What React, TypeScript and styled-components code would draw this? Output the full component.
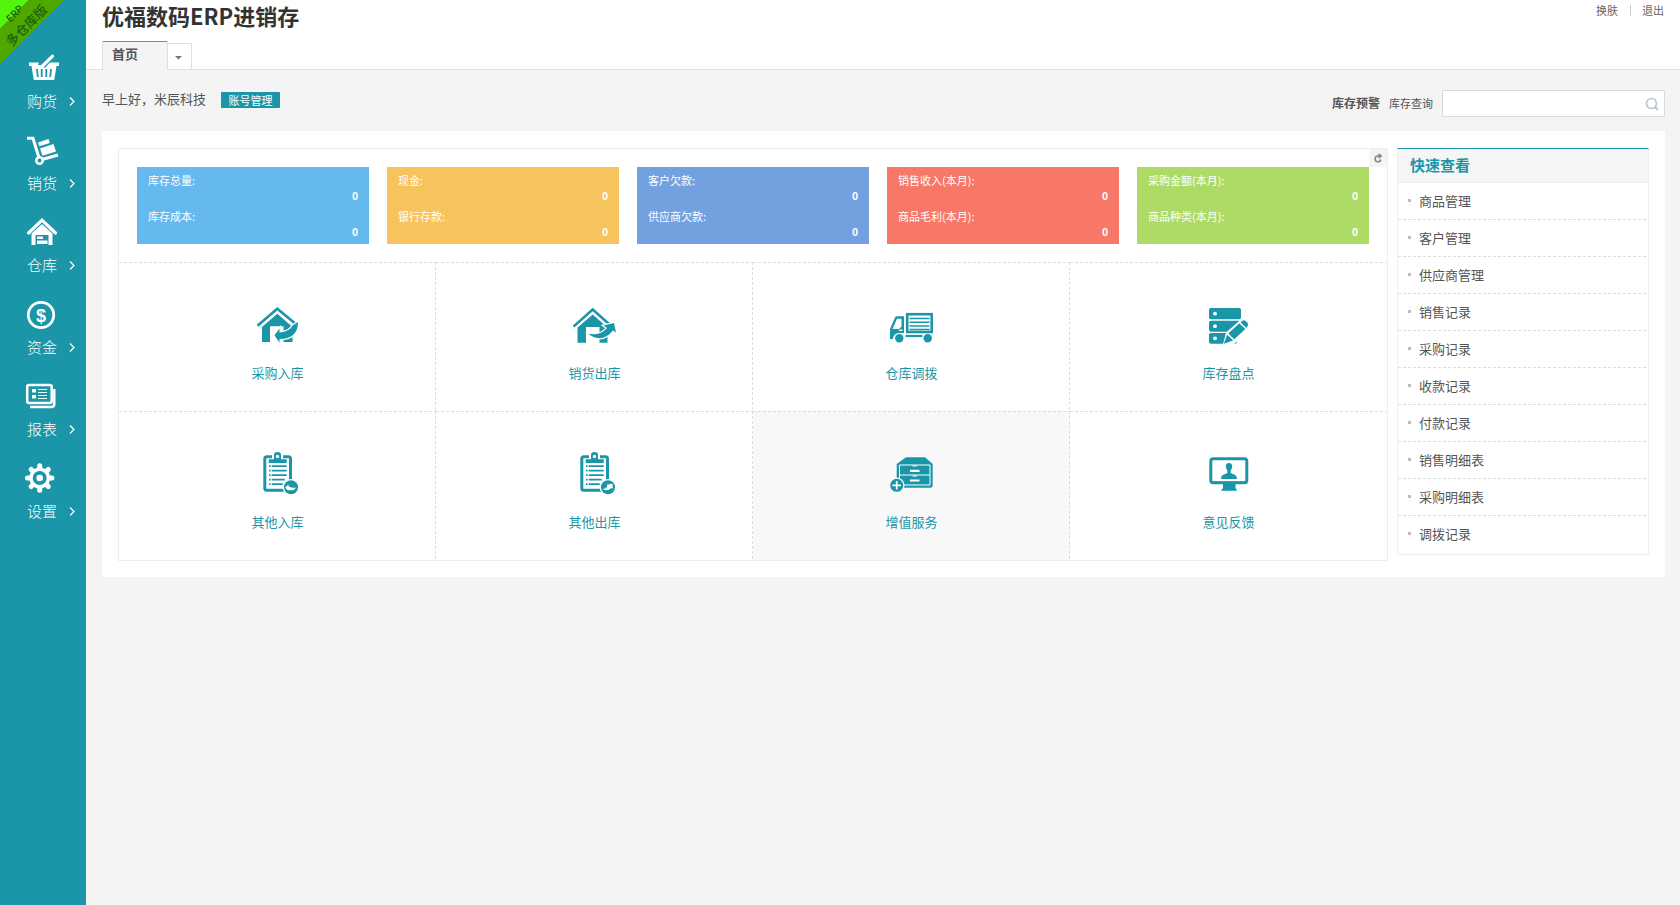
import React from "react";
import styled, { createGlobalStyle } from "styled-components";

const teal = "#1b96a9";
const line = "#eeeeee";
const dash = "#dddddd";

const Global = createGlobalStyle`
  *, *::before, *::after { box-sizing: border-box; }
  body {
    margin: 0;
    background: #f4f4f4;
    color: #555;
    font: 13px/20px "Noto Sans CJK SC", "Noto Sans", sans-serif;
  }
  a { color: inherit; text-decoration: none; }
  h1, h2, ul, dl, dd { margin: 0; padding: 0; }
  ul { list-style: none; }
  button { font: inherit; cursor: pointer; }
`;

const Page = styled.div`
  display: flex;
  min-height: 100vh;
`;

const Sidebar = styled.aside`
  position: relative;
  flex: 0 0 86px;
  padding-top: 50px;
  background: ${teal};
`;

const Ribbon = styled.div`
  position: absolute;
  top: 0;
  left: 0;
  width: 64px;
  height: 63px;
  background: linear-gradient(135deg, #52f50c 0 20px, #4fa800 20px 45px, transparent 45px);
  color: #1c5f10;
`;

const RibbonText = styled.span<{ $x: number; $y: number; $size: number }>`
  position: absolute;
  left: ${(p) => p.$x}px;
  top: ${(p) => p.$y}px;
  font-size: ${(p) => p.$size}px;
  line-height: 13px;
  font-weight: 500;
  white-space: nowrap;
  transform: translate(-50%, -50%) rotate(-45deg);
`;

const NavList = styled.ul`
  display: flex;
  flex-direction: column;
  gap: 21px;
`;

const NavLink = styled.a`
  display: block;
  color: #fff;
`;

const NavIcon = styled.svg`
  display: block;
  width: 36px;
  height: 36px;
  margin: 0 0 5px 24px;
`;

const NavLabel = styled.span`
  display: flex;
  align-items: center;
  gap: 12px;
  padding-left: 27px;
  font-size: 15px;
  font-weight: 300;
`;

const Main = styled.main`
  flex: 1;
  min-width: 0;
`;

const Header = styled.header`
  display: flex;
  justify-content: space-between;
  padding: 0 15px 0 16px;
  background: #fff;
  border-bottom: 1px solid #dfdfdf;
`;

const Title = styled.h1`
  margin-bottom: 11px;
  font-size: 22px;
  line-height: 30px;
  color: #333;
`;

const Tabs = styled.nav`
  display: flex;
  align-items: flex-end;
`;

const Tab = styled.a`
  width: 66px;
  height: 29px;
  margin-bottom: -1px;
  padding-left: 9px;
  border: solid #dfdfdf;
  border-width: 0 1px;
  background: linear-gradient(#3ba6b5 0 1px, #f4f4f4 1px);
  line-height: 26px;
  font-weight: 700;
`;

const TabMenu = styled.button`
  display: grid;
  place-items: center;
  width: 24px;
  height: 26px;
  padding: 2px 2px 0 0;
  border: solid #dfdfdf;
  border-width: 1px 1px 0 0;
  border-radius: 0 2px 0 0;
  background: #fff;
`;

const UserLinks = styled.div`
  display: flex;
  gap: 12px;
  padding-right: 1px;
  font-size: 11px;
  color: #666;

  a + a::before {
    content: "";
    display: inline-block;
    height: 11px;
    margin-right: 11px;
    border-left: 1px solid #ccc;
    vertical-align: -1px;
  }
`;

const Content = styled.div`
  padding: 0 15px 16px 16px;
`;

const TopRow = styled.div`
  display: flex;
  justify-content: space-between;
  align-items: flex-start;
  padding: 20px 0 14px;
`;

const Greeting = styled.div`
  display: flex;
  gap: 15px;
  line-height: 18px;
`;

const AccountButton = styled.button`
  width: 59px;
  height: 16px;
  margin-top: 2px;
  padding: 0 0 1px;
  border: 0;
  border-radius: 1px;
  background: ${teal};
  color: #fff;
  font-size: 11px;
  line-height: 14px;
`;

const Search = styled.form`
  display: flex;
  align-items: center;
  gap: 9px;
  font-size: 11px;

  label { padding-bottom: 2px; }
`;

const Warning = styled.a`
  padding-bottom: 2px;
  font-size: 12px;
  font-weight: 700;
`;

const SearchBox = styled.span`
  display: flex;
  align-items: center;
  width: 223px;
  height: 27px;
  padding-right: 5px;
  border: 1px solid #d3dce2;
  background: #fff;
`;

const SearchInput = styled.input`
  flex: 1;
  min-width: 0;
  border: 0;
  outline: 0;
  padding: 0 6px;
  background: transparent;
`;

const IconButton = styled.button`
  display: grid;
  padding: 0;
  border: 0;
  background: transparent;
`;

const Panel = styled.section`
  display: flex;
  align-items: flex-start;
  gap: 9px;
  padding: 17px 16px 16px;
  background: #fff;
`;

const Board = styled.div`
  position: relative;
  flex: 1;
  min-width: 0;
  border: 1px solid ${line};
`;

const Refresh = styled.button`
  position: absolute;
  top: 0;
  right: 0;
  display: grid;
  place-items: center;
  width: 18px;
  height: 18px;
  padding: 0;
  border: 0;
  background: #f4f4f4;
`;

const Stats = styled.div`
  display: flex;
  gap: 18px;
  padding: 18px;
`;

const StatCard = styled.dl<{ $color: string }>`
  flex: 1;
  display: flex;
  flex-direction: column;
  gap: 4px;
  padding: 5px 11px 4px;
  background: ${(p) => p.$color};
  color: #fff;
  font-size: 11px;
  line-height: 16px;

  dd {
    text-align: right;
    font-family: "Liberation Sans", sans-serif;
    font-weight: 700;
  }
`;

const hDash = `repeating-linear-gradient(90deg, ${dash} 0 3px, transparent 3px 5px)`;
const vDash = `repeating-linear-gradient(180deg, ${dash} 0 3px, transparent 3px 5px)`;

const Actions = styled.div`
  display: grid;
  grid-template-columns: repeat(4, 1fr);
`;

const Action = styled.a<{ $active?: boolean; $last: boolean }>`
  display: flex;
  flex-direction: column;
  align-items: center;
  gap: 15px;
  padding: 38px 0 28px;
  background:
    ${hDash} top / 100% 1px no-repeat,
    ${(p) => (p.$last ? "" : `${vDash} right / 1px 100% no-repeat,`)}
    ${(p) => (p.$active ? "#f8f8f8" : "#fff")};
  color: ${teal};

  svg {
    width: 47px;
    height: 48px;
  }
`;

const Quick = styled.aside`
  flex: 0 0 252px;
  padding-bottom: 1px;
  border: 1px solid ${line};
  border-top-color: ${teal};
`;

const QuickTitle = styled.h2`
  padding: 0 12px 2px;
  border-bottom: 1px solid ${line};
  background: #f6f6f6;
  color: ${teal};
  font-size: 15px;
  line-height: 31px;
`;

const QuickItem = styled.li`
  &:not(:last-child) {
    background: ${hDash} bottom / 100% 1px no-repeat;
  }
  a {
    display: flex;
    align-items: center;
    gap: 8px;
    height: 37px;
    padding: 0 0 2px 10px;
  }
  a::before {
    content: "";
    width: 3px;
    height: 3px;
    background: #bbb;
  }
`;

const navItems: [string, React.ReactNode][] = [
  ["购货", (
    <>
      <path d="M5 12.5h10l-1 2.500h9l2-2.500h10v3.500h-2.500l-2.300 14H9.800L7.500 16H5z" fill="#fff" />
      <path d="M28.500 6 18.500 16" stroke={teal} strokeWidth="6" />
      <path d="M28.500 6.200 18.500 16" stroke="#fff" strokeWidth="3.200" strokeLinecap="round" />
      <path d="M13 19l.8 8M17.700 19v8M22.300 19v8M27 19l-.8 8" stroke={teal} strokeWidth="1.800" />
    </>
  )],
  ["销货", (
    <>
      <path d="M3 6.200h6l6 19.500M18 27.500l16-4.500" fill="none" stroke="#fff" strokeWidth="3" />
      <circle cx="15.500" cy="28.500" r="3.200" fill="none" stroke="#fff" strokeWidth="2.500" />
      <path d="M14 10.500 24.500 7l1.300 4-10.500 3.300zM16 16.500 29.500 12l2.500 7.500-13.500 4.300z" fill="#fff" />
    </>
  )],
  ["仓库", (
    <>
      <path d="M4.500 19 18 6.200 31.500 19" fill="none" stroke="#fff" strokeWidth="3.200" strokeLinecap="round" />
      <path d="M7.500 31V19.500L18 10l10.500 9.500V31z" fill="#fff" />
      <path d="M11.500 21h13v10h-13z" fill={teal} />
      <path d="M13 22.500h6v2.500h-6zM13 26.500h10.500V30H13z" fill="#fff" />
    </>
  )],
  ["资金", (
    <>
      <circle cx="17" cy="19" r="12.700" fill="none" stroke="#fff" strokeWidth="2.700" />
      <text x="17" y="25.500" textAnchor="middle" fill="#fff" fontSize="18" fontWeight="700" fontFamily="Liberation Sans, sans-serif">$</text>
    </>
  )],
  ["报表", (
    <>
      <rect x="3.200" y="7" width="24.500" height="18" rx="2" fill="none" stroke="#fff" strokeWidth="2.500" />
      <path d="M30.300 11v15q0 3-3 3H6" fill="none" stroke="#fff" strokeWidth="2.400" />
      <path d="M8 11h4v3.500H8zM8 17h4v3.500H8z" fill="#fff" />
      <path d="M14 11.500h9M14 14.500h9M14 17.500h9M14 20.500h9" stroke="#fff" strokeWidth="1.200" />
    </>
  )],
  ["设置", (
    <>
      <g stroke="#fff" strokeWidth="5" strokeLinecap="round">
        <path d="M15.700 5.800v24.400M3.500 18h24.400M7.100 9.400l17.200 17.200M24.300 9.400 7.100 26.600" />
      </g>
      <circle cx="15.700" cy="18" r="10.500" fill="#fff" />
      <circle cx="15.700" cy="18" r="7" fill={teal} />
      <circle cx="15.700" cy="18" r="3.300" fill="#fff" />
    </>
  )],
];

const stats = [
  { color: "#66b9ef", rows: ["库存总量:", "库存成本:"] },
  { color: "#f7c35c", rows: ["现金:", "银行存款:"] },
  { color: "#73a1df", rows: ["客户欠款:", "供应商欠款:"] },
  { color: "#f77866", rows: ["销售收入(本月):", "商品毛利(本月):"] },
  { color: "#aedb65", rows: ["采购金额(本月):", "商品种类(本月):"] },
];

const Clipboard = ({ children }: { children: React.ReactNode }) => (
  <>
    <rect x="10.800" y="7.800" width="25.700" height="33.500" rx="2" fill="none" stroke={teal} strokeWidth="3" />
    <path d="M18 5h11v6H18z" fill="#fff" />
    <path d="M14.700 10.300h5.300V6q0-3 3.500-3T27 6v4.300h5.700V14h-18z" fill={teal} />
    <circle cx="23.500" cy="7.500" r="1.700" fill="#fff" />
    <path d="M17.700 17.200h15M17.700 21.700h15M17.700 26.200h15M17.700 30.700h13M17.700 35.200h11" stroke={teal} strokeWidth="1.800" />
    <path d="M15 17.200h1.600M15 21.700h1.600M15 26.200h1.600M15 30.700h1.600M15 35.200h1.600" stroke={teal} strokeWidth="1.800" />
    <circle cx="37" cy="38.300" r="8.400" fill="#fff" />
    <circle cx="37" cy="38.300" r="7" fill={teal} />
    {children}
  </>
);

const actions: { label: string; icon: React.ReactNode; active?: boolean }[] = [
  {
    label: "采购入库",
    icon: (
      <>
        <path d="M3.500 25.800 23.300 8.700 43 25" fill="none" stroke={teal} strokeWidth="2.600" />
        <path d="M8 42V27L23.300 13.800 38.500 27V42H29.500V26.300H16V42z" fill={teal} />
        <path d="M20.500 35.300l5-6.800V32.500Q36 31.500 38.500 25.500l5.500-3.500Q44 39 25.500 39v3.700z" fill={teal} stroke="#fff" strokeWidth="2.400" paintOrder="stroke" />
      </>
    ),
  },
  {
    label: "销货出库",
    icon: (
      <>
        <path d="M2.500 26.600 21.700 9.500 38 24" fill="none" stroke={teal} strokeWidth="2.600" />
        <path d="M6.500 42.700V27.500L21.700 14.500 36.500 27.500V42.700H28.500V27H15V42.700z" fill={teal} />
        <path d="M17.500 33.800Q29 36 36 28l-3.500-2.500L43 23l2 9.500-3-2Q34 40.500 24 37.500 20 36.300 17.500 33.800z" fill={teal} stroke="#fff" strokeWidth="2.400" paintOrder="stroke" />
      </>
    ),
  },
  {
    label: "仓库调拨",
    icon: (
      <>
        <rect x="19.200" y="14.200" width="24.500" height="17.800" fill="#fff" stroke={teal} strokeWidth="2.600" />
        <path d="M21.500 18.500h20M21.500 22.200h20M21.500 25.900h20M21.500 29.400h20" stroke={teal} strokeWidth="1.500" />
        <path d="M2 39V29l5-11.500q.5-1.300 2-1.300h7V33H11q-4 0-5.500 3.500L5 39z" fill={teal} />
        <path d="M4.500 29 9 18.800h4.500v7.500L11 29z" fill="#fff" />
        <path d="M11 29.500h3.500V31H11z" fill="#fff" />
        <circle cx="11.300" cy="38.300" r="4.200" fill={teal} />
        <circle cx="39.700" cy="38.300" r="4.200" fill={teal} />
        <path d="M17.500 36h17" stroke={teal} strokeWidth="2.200" />
      </>
    ),
  },
  {
    label: "库存盘点",
    icon: (
      <>
        <rect x="4" y="8" width="32" height="11.300" rx="2" fill={teal} />
        <rect x="4" y="20.700" width="32" height="11" rx="2" fill={teal} />
        <rect x="4" y="33" width="28" height="10.700" rx="2" fill={teal} />
        <circle cx="10" cy="13.700" r="1.900" fill="#fff" />
        <circle cx="10" cy="26.200" r="1.900" fill="#fff" />
        <circle cx="10" cy="38.300" r="1.900" fill="#fff" />
        <path d="M17.500 46 21 32.500 36.500 19h9v10L28 45z" fill="#fff" />
        <path d="M18.800 43.800l3.400-9 6 5.600zM23.300 33.600 34.300 23.300l6 5.800-11 10.200zM35.500 22.200l2-1.500q1.500-1 3.500.5l1.500 1.500q1.300 2 0 3.500l-1.300 1.700z" fill={teal} />
      </>
    ),
  },
  {
    label: "其他入库",
    icon: <Clipboard><path d="M31 38.500l3.500-3v1.700q4 2.300 8 1.300-3 4-8 2.300V42z" fill="#fff" /></Clipboard>,
  },
  {
    label: "其他出库",
    icon: <Clipboard><path d="M31.500 40q3.500 0 5-3l-1-1.200 6-1 .3 5-1.500-.8q-4 4-8.800 1z" fill="#fff" /></Clipboard>,
  },
  {
    label: "增值服务",
    active: true,
    icon: (
      <>
        <path d="M8.700 15 18 8.300h19l7.700 6.700v21.500q0 2.200-2.200 2.200H11q-2.300 0-2.300-2.200z" fill={teal} />
        <path d="M11.500 16h30.500v20H11.500zM11.500 26h30.500" fill="none" stroke="#fff" strokeWidth="1" />
        <path d="M22 21.800h9.500M22 31.500h9.500" stroke="#fff" strokeWidth="2.200" />
        <path d="M24.500 17h4.500M24.500 27h4.500" stroke="#fff" strokeWidth="1" />
        <circle cx="8.700" cy="36.300" r="7.800" fill="#f8f8f8" />
        <circle cx="8.700" cy="36.300" r="6.500" fill={teal} />
        <path d="M8.700 32v8.600M4.400 36.300H13" stroke="#fff" strokeWidth="1.700" />
      </>
    ),
  },
  {
    label: "意见反馈",
    icon: (
      <>
        <rect x="5.800" y="9.800" width="36" height="24" rx="2.500" fill="none" stroke={teal} strokeWidth="3" />
        <path d="M6 32.500h36v2H6zM18 35h12.500v4l1.700 2.700H16l2-2.700z" fill={teal} />
        <path d="M24 14q3.400 0 3.200 3.500-.3 2.500-1.500 3.500v3l4.500 2q1.800 1 1.800 4H16q0-3 1.800-4l4.500-2v-3q-1.300-1-1.500-3.500Q20.600 14 24 14z" fill={teal} />
      </>
    ),
  },
];

const quick = [
  "商品管理", "客户管理", "供应商管理", "销售记录", "采购记录",
  "收款记录", "付款记录", "销售明细表", "采购明细表", "调拨记录",
];

export default function App() {
  return (
    <Page>
      <Global />
      <Sidebar>
        <Ribbon>
          <RibbonText $x={14} $y={13} $size={10}>ERP</RibbonText>
          <RibbonText $x={26} $y={25} $size={13}>多仓库版</RibbonText>
        </Ribbon>
        <nav>
          <NavList>
            {navItems.map(([label, icon]) => (
              <li key={label}>
                <NavLink href="#">
                  <NavIcon viewBox="0 0 36 36" aria-hidden>{icon}</NavIcon>
                  <NavLabel>
                    {label}
                    <svg width="6" height="10" viewBox="0 0 6 10" fill="none" stroke="#fff" strokeWidth="1.200" aria-hidden>
                      <path d="M1 1.500l4 4-4 4" />
                    </svg>
                  </NavLabel>
                </NavLink>
              </li>
            ))}
          </NavList>
        </nav>
      </Sidebar>
      <Main>
        <Header>
          <div>
            <Title>优福数码ERP进销存</Title>
            <Tabs>
              <Tab href="#">首页</Tab>
              <TabMenu type="button" aria-label="标签菜单">
                <svg width="7" height="4" viewBox="0 0 7 4" aria-hidden><path d="M0 0h7L3.500 3.500z" fill="#777" /></svg>
              </TabMenu>
            </Tabs>
          </div>
          <UserLinks>
            <a href="#">换肤</a>
            <a href="#">退出</a>
          </UserLinks>
        </Header>
        <Content>
          <TopRow>
            <Greeting>
              <span>早上好，米辰科技</span>
              <AccountButton type="button">账号管理</AccountButton>
            </Greeting>
            <Search>
              <Warning href="#">库存预警</Warning>
              <label htmlFor="stock">库存查询</label>
              <SearchBox>
                <SearchInput id="stock" type="text" />
                <IconButton type="button" aria-label="查询">
                  <svg width="14" height="14" viewBox="0 0 14 14" fill="none" stroke="#b9c9d3" aria-hidden>
                    <circle cx="6.500" cy="6.500" r="5" strokeWidth="1.700" />
                    <path d="M10 10l3 3" strokeWidth="2" />
                  </svg>
                </IconButton>
              </SearchBox>
            </Search>
          </TopRow>
          <Panel>
            <Board>
              <Stats>
                {stats.map((s) => (
                  <StatCard key={s.color} $color={s.color}>
                    {s.rows.map((r) => (
                      <div key={r}>
                        <dt>{r}</dt>
                        <dd>0</dd>
                      </div>
                    ))}
                  </StatCard>
                ))}
              </Stats>
              <Actions>
                {actions.map((a, i) => (
                  <Action key={a.label} href="#" $active={a.active} $last={i % 4 === 3}>
                    <svg viewBox="0 0 47 48" aria-hidden>{a.icon}</svg>
                    {a.label}
                  </Action>
                ))}
              </Actions>
              <Refresh type="button" aria-label="刷新">
                <svg width="10" height="10" viewBox="0 0 10 10" aria-hidden>
                  <path d="M7.500 3H4.500a2.900 2.900 0 1 0 3.300 3.500" fill="none" stroke="#888" strokeWidth="1.600" />
                  <path d="M5.500 0 9.500 3 5.500 6z" fill="#888" />
                </svg>
              </Refresh>
            </Board>
            <Quick>
              <QuickTitle>快速查看</QuickTitle>
              <ul>
                {quick.map((q) => (
                  <QuickItem key={q}><a href="#">{q}</a></QuickItem>
                ))}
              </ul>
            </Quick>
          </Panel>
        </Content>
      </Main>
    </Page>
  );
}
